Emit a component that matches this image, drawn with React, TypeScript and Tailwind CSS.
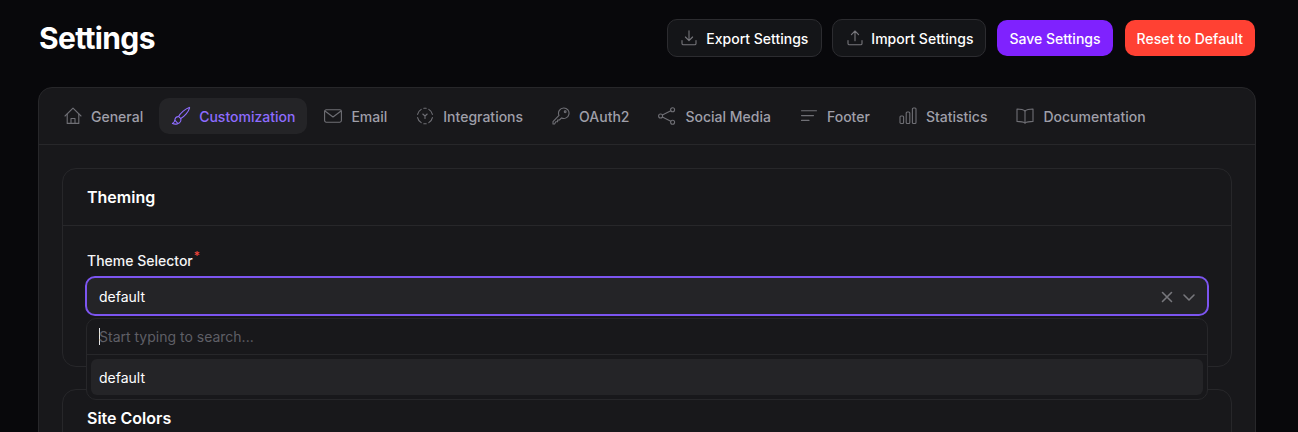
import React from "react";

const ic = { fill: "none", stroke: "currentColor", strokeWidth: 1.1, strokeLinecap: "round" as const, strokeLinejoin: "round" as const };

const Home = () => (
  <svg width="18" height="18" viewBox="0 0 18 18" {...ic}>
    <path d="M1 9 L9 1.2 L17 9" />
    <path d="M3.2 7 V16.4 H14.8 V7" />
    <path d="M7 16.4 V11.5 H11 V16.4" />
  </svg>
);
const Brush = () => (
  <svg width="20" height="20" viewBox="0 0 20 20" {...ic}>
    <path d="M18.2 1.4 C14.6 2.6 9.4 7 7.6 10.4 L9.8 12.6 C13.4 10.6 17.6 5.8 18.6 1.9 Z" />
    <path d="M7.4 10.6 C4.8 10.6 4 12.6 3.8 14.2 C3.6 15.8 2.8 16.8 1.4 17.6 C4.4 18.6 8.6 18 9.6 15.4 C10 14.3 10 13.4 9.8 12.8" />
    <path d="M4 14.4 L6.4 16.8" />
  </svg>
);
const Mail = () => (
  <svg width="18" height="18" viewBox="0 0 18 18" {...ic}>
    <rect x="0.6" y="2.8" width="16.8" height="12.4" rx="1.6" />
    <path d="M1 4 L9 10 L17 4" />
  </svg>
);
const Integrations = () => (
  <svg width="18" height="18" viewBox="0 0 18 18" {...ic}>
    <path d="M7.8 1.2 H10.2 M7.8 16.8 H10.2" />
    <path d="M12.8 2.4 Q15.8 4.2 16.4 7.4 M16.4 10.6 Q15.8 13.8 12.8 15.6 M5.2 15.6 Q2.2 13.8 1.6 10.6 M1.6 7.4 Q2.2 4.2 5.2 2.4" />
    <path d="M6.8 7 L9 9 L11.2 7 M9 9 V11.4" />
  </svg>
);
const Key = () => (
  <svg width="18" height="18" viewBox="0 0 18 18" {...ic}>
    <path d="M11.8 1 A5.2 5.2 0 1 1 9.6 10.9 L7.4 13 H5.6 V14.8 H3.8 L2.6 17 H1 V14.6 L7 8.4 A5.2 5.2 0 0 1 11.8 1 Z" />
    <circle cx="13.2" cy="4.8" r="0.9" />
  </svg>
);
const Share = () => (
  <svg width="18" height="18" viewBox="0 0 18 18" {...ic}>
    <circle cx="14.6" cy="2.8" r="2" />
    <circle cx="2.6" cy="9" r="2" />
    <circle cx="14.6" cy="15.2" r="2" />
    <path d="M4.4 8 L12.8 3.8 M4.4 10 L12.8 14.2" />
  </svg>
);
const Lines = () => (
  <svg width="18" height="18" viewBox="0 0 18 18" {...ic}>
    <path d="M1.5 3.8 H16.5 M1.5 8.6 H13.5 M1.5 13.4 H9" />
  </svg>
);
const Bars = () => (
  <svg width="18" height="18" viewBox="0 0 18 18" {...ic}>
    <rect x="1" y="9" width="3.6" height="7.5" rx="1" />
    <rect x="7.2" y="5" width="3.6" height="11.5" rx="1" />
    <rect x="13.4" y="1" width="3.6" height="15.5" rx="1" />
  </svg>
);
const Book = () => (
  <svg width="18" height="18" viewBox="0 0 18 18" {...ic}>
    <path d="M9 4 C7.5 2.6 5 2 1 2 V14.4 C5 14.4 7.5 15 9 16 C10.5 15 13 14.4 17 14.4 V2 C13 2 10.5 2.6 9 4 Z" />
    <path d="M9 4 V16" />
  </svg>
);
const Download = () => (
  <svg width="16" height="16" viewBox="0 0 16 16" {...ic}>
    <path d="M8 0.8 V10.4 M4.4 7 L8 10.6 L11.6 7" />
    <path d="M1 10.6 V13.4 A1.4 1.4 0 0 0 2.4 14.8 H13.6 A1.4 1.4 0 0 0 15 13.4 V10.6" />
  </svg>
);
const Upload = () => (
  <svg width="16" height="16" viewBox="0 0 16 16" {...ic}>
    <path d="M8 10.8 V1.2 M4.4 4.6 L8 1 L11.6 4.6" />
    <path d="M1 10.6 V13.4 A1.4 1.4 0 0 0 2.4 14.8 H13.6 A1.4 1.4 0 0 0 15 13.4 V10.6" />
  </svg>
);

const tabs = [
  { label: "General", icon: <Home /> },
  { label: "Customization", icon: <Brush />, active: true },
  { label: "Email", icon: <Mail /> },
  { label: "Integrations", icon: <Integrations /> },
  { label: "OAuth2", icon: <Key /> },
  { label: "Social Media", icon: <Share /> },
  { label: "Footer", icon: <Lines /> },
  { label: "Statistics", icon: <Bars /> },
  { label: "Documentation", icon: <Book /> },
];

export default function App() {
  return (
    <div className="h-[432px] overflow-hidden bg-[#08080b] pl-[38px] pr-[42px] font-['Inter',sans-serif]">
      <div className="flex h-[87px] items-start justify-between pl-px pr-px pt-[19px]">
        <h1 className="mt-[1px] text-[30px] leading-9 font-bold tracking-[-0.65px] text-white">Settings</h1>
        <div className="flex items-center gap-[10px]">
          <button className="flex h-[38px] items-center gap-[9px] rounded-[10px] border border-[#2c2c30] bg-[#141518] pl-[13px] pr-[13px] text-sm font-medium text-white">
            <span className="text-[#77777c]"><Download /></span><span className="pt-px">Export Settings</span>
          </button>
          <button className="flex h-[38px] items-center gap-[8px] rounded-[10px] border border-[#2c2c30] bg-[#141518] pl-[14px] pr-[12px] text-sm font-medium text-white">
            <span className="text-[#77777c]"><Upload /></span><span className="pt-px">Import Settings</span>
          </button>
          <button className="ml-px h-[36px] rounded-[10px] bg-[#7f22fe] px-[12px] pt-px text-sm font-medium text-white">Save Settings</button>
          <button className="ml-[2px] h-[36px] rounded-[10px] bg-[#ff4133] px-[12px] pt-px text-sm font-medium text-white">Reset to Default</button>
        </div>
      </div>

      <div className="h-[400px] rounded-t-[14px] border border-[#27272a] bg-[#18181b]">
        <div className="flex h-[57px] items-start gap-[4px] border-b border-[#27272a] pl-[12px] pt-[10px]">
          {tabs.map((t) => (
            <div
              key={t.label}
              className={
                "flex h-[36px] items-center gap-[8px] rounded-[10px] px-[12px] text-sm font-medium " +
                (t.active ? "bg-[#242427] text-[#8e6cff]" : "text-[#9f9fa9]")
              }
            >
              <span className={"flex h-5 w-5 items-center justify-center " + (t.active ? "text-[#8e6cff]" : "text-[#6f6f75]")}>{t.icon}</span>
              <span className="pt-px">{t.label}</span>
            </div>
          ))}
        </div>

        <div className="flex flex-col gap-[22px] px-[23px] pt-[23px]">
          <section className="relative h-[199px] rounded-[14px] border border-[#27272a]">
            <div className="flex h-[57px] items-center border-b border-[#27272a] px-[24px] text-base leading-6 font-semibold text-white">
              Theming
            </div>
            <div className="px-[24px] pt-[25px]">
              <label className="block text-sm leading-[20px] font-medium text-[#f4f4f5]">
                Theme Selector<sup className="ml-px text-[12px] text-[#f0443a]">*</sup>
              </label>
              <div className="mx-[-2px] mt-[5px] flex h-[40px] items-center justify-between rounded-[10px] border-2 border-[#7c55f0] bg-[#242427] pl-[12px] pr-[11px] pt-px text-sm text-white">
                default
                <span className="flex items-center gap-[8px] text-[#77777c]">
                  <svg width="14" height="14" viewBox="0 0 14 14" fill="none" stroke="currentColor" strokeWidth="1.6" strokeLinecap="round"><path d="M2.5 2.5 L11.5 11.5 M11.5 2.5 L2.5 11.5" /></svg>
                  <svg width="14" height="14" viewBox="0 0 14 14" fill="none" stroke="currentColor" strokeWidth="1.6" strokeLinecap="round" strokeLinejoin="round"><path d="M2 5 L7 10 L12 5" /></svg>
                </span>
              </div>
            </div>
            <div className="absolute left-[23px] right-[23px] top-[149px] z-10 h-[82px] rounded-[10px] border border-[#27272a] bg-[#18181b]">
              <div className="flex h-[36px] items-center border-b border-[#27272a] pl-[12px] text-sm text-[#5f5f66]">
                <span className="mr-[-1px] h-[17px] w-px bg-[#e4e4e7]" />
                Start typing to search...
              </div>
              <div className="mx-[4px] mt-[4px] flex h-[36px] items-center rounded-[6px] bg-[#242427] pl-[8px] pt-[2px] text-sm text-white">
                default
              </div>
            </div>
          </section>

          <section className="h-[200px] rounded-[14px] border border-[#27272a] px-[24px] pt-[16px]">
            <h2 className="text-base leading-6 font-semibold text-white">Site Colors</h2>
          </section>
        </div>
      </div>
    </div>
  );
}
